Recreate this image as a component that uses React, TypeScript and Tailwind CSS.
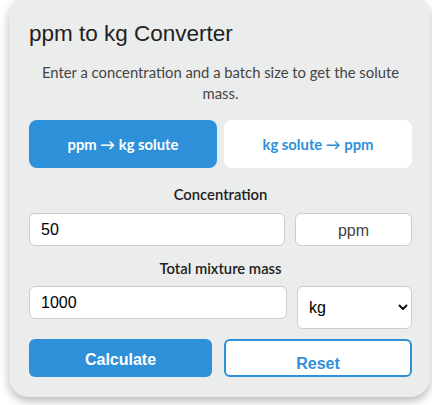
import { useState } from 'react';

export default function App() {
    const [mode, setMode] = useState<'toKg' | 'toPpm'>('toKg');
    const [ppm, setPpm] = useState('50');
    const [mass, setMass] = useState('1000');
    const [unit, setUnit] = useState('kg');

    const segoe = { fontFamily: 'Lato, "Noto Sans", sans-serif' };

    return (
        <div className="w-[432px] h-[405px] bg-white overflow-hidden">
            {/* Card */}
            <div className="ml-[9px] mt-[-4px] w-[421px] rounded-[20px] bg-[#ebecec] pl-[20px] pr-[18px] pt-[25px] pb-[20px] shadow-[0_4px_10px_rgba(0,0,0,0.28)]">
                <h1 className="text-[22.5px] leading-[25px] text-[#222] font-['Liberation_Sans',Arial,sans-serif]">
                    ppm to kg Converter
                </h1>
                <p className="mt-[16px] text-center text-[14.8px] leading-[21px] text-[#444]" style={segoe}>
                    Enter a concentration and a batch size to get the solute mass.
                </p>

                {/* Mode tabs */}
                <div className="mt-[16px] flex gap-[7px]" style={segoe}>
                    <button
                        onClick={() => setMode('toKg')}
                        className={`w-[188px] h-[48px] rounded-[8px] text-[14.8px] font-bold ${mode === 'toKg' ? 'bg-[#2e90d8] text-white' : 'bg-white text-[#2e90d8]'}`}
                    >
                        ppm → kg solute
                    </button>
                    <button
                        onClick={() => setMode('toPpm')}
                        className={`w-[188px] h-[48px] rounded-[8px] text-[14.8px] font-bold ${mode === 'toPpm' ? 'bg-[#2e90d8] text-white' : 'bg-white text-[#2e90d8]'}`}
                    >
                        kg solute → ppm
                    </button>
                </div>

                <label className="mt-[16px] block text-center text-[14.8px] leading-[21px] font-semibold text-[#222]" style={segoe}>
                    Concentration
                </label>
                <div className="mt-[8px] flex gap-[10px] font-['Liberation_Sans',Arial,sans-serif]">
                    <input
                        value={ppm}
                        onChange={(e) => setPpm(e.target.value)}
                        className="w-[256px] h-[33px] rounded-[6px] border border-[#cccccc] bg-white px-[11px] text-[16px] text-black outline-none"
                    />
                    <div className="w-[117px] h-[33px] rounded-[6px] border border-[#cccccc] bg-white flex items-center justify-center pt-[3px] text-[16px] text-[#444]">
                        ppm
                    </div>
                </div>

                <label className="mt-[12px] block text-center text-[14.8px] leading-[21px] font-semibold text-[#222]" style={segoe}>
                    Total mixture mass
                </label>
                <div className="mt-[7px] flex items-start gap-[10px] font-['Liberation_Sans',Arial,sans-serif]">
                    <input
                        value={mass}
                        onChange={(e) => setMass(e.target.value)}
                        className="w-[258px] h-[33px] rounded-[6px] border border-[#cccccc] bg-white px-[11px] text-[16px] text-black outline-none"
                    />
                    <div className="relative w-[115px] h-[43px]">
                        <select
                            value={unit}
                            onChange={(e) => setUnit(e.target.value)}
                            className="appearance-none w-full h-full rounded-[6px] border border-[#cccccc] bg-white pl-[11px] text-[16px] text-black outline-none"
                        >
                            <option value="kg">kg</option>
                            <option value="g">g</option>
                            <option value="t">t</option>
                            <option value="lb">lb</option>
                        </select>
                        <svg
                            className="pointer-events-none absolute right-[4px] top-[18px]"
                            width="10"
                            height="7"
                            viewBox="0 0 10 7"
                        >
                            <path d="M1.5 1.5 L5 5 L8.5 1.5" fill="none" stroke="#111" strokeWidth="2" strokeLinecap="round" strokeLinejoin="round" />
                        </svg>
                    </div>
                </div>

                {/* Actions */}
                <div className="mt-[10px] flex gap-[12px] font-['Liberation_Sans',Arial,sans-serif]">
                    <button className="w-[183px] h-[38px] rounded-[6px] bg-[#2e90d8] text-white text-[16px] font-bold pt-[4px]">
                        Calculate
                    </button>
                    <button className="w-[188px] h-[38px] rounded-[6px] border-2 border-[#2e90d8] bg-white text-[#2e90d8] text-[16px] font-bold pt-[11px]">
                        Reset
                    </button>
                </div>
            </div>
        </div>
    );
}
